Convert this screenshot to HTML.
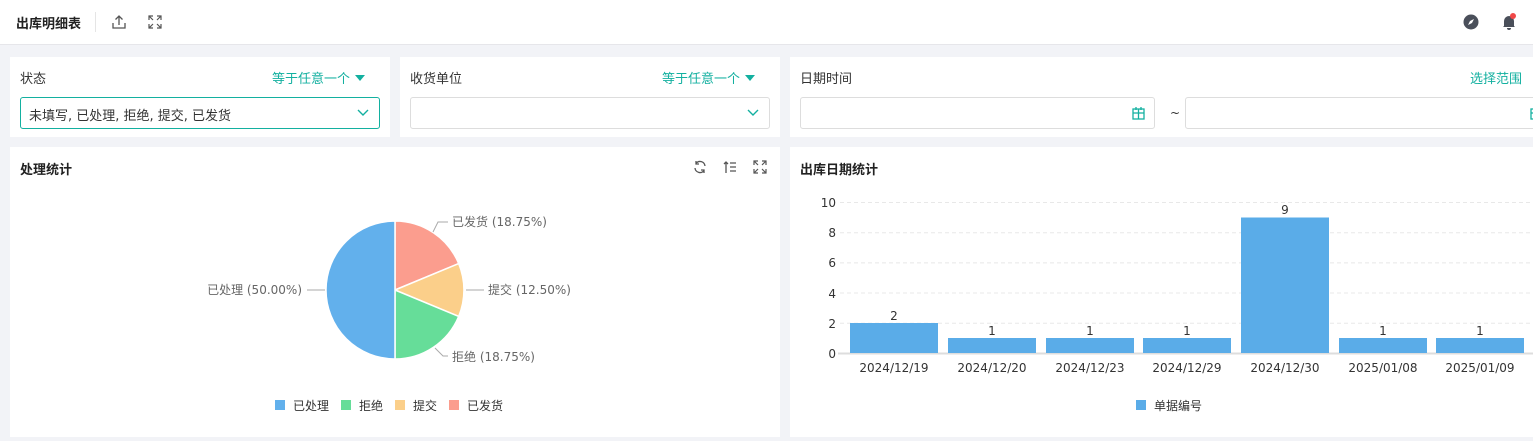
<!DOCTYPE html>
<html><head><meta charset="utf-8"><style>
*{box-sizing:border-box;margin:0;padding:0}
body{width:1533px;height:441px;overflow:hidden;background:#f2f3f7;font-family:"DejaVu Sans","Noto Sans CJK SC",sans-serif;position:relative;color:#333}
.top{position:absolute;left:0;top:0;width:1533px;height:45px;background:#fff;border-bottom:1px solid #e6e6ea}
.card{position:absolute;background:#fff}
.lbl{position:absolute;font-size:13px;color:#333}
.teal{color:#13b0a0}
.inp{position:absolute;height:32px;border:1px solid #ddd;border-radius:3px;background:#fff}
.t{position:absolute;font-size:13px;font-weight:bold;color:#222}
.tri{display:inline-block;width:0;height:0;border-left:5px solid transparent;border-right:5px solid transparent;border-top:6px solid #13b0a0;margin-left:5px;vertical-align:2px}
</style></head><body>
<div class="top">
 <div style="position:absolute;left:16px;top:13px;font-size:13px;font-weight:bold;color:#222">出库明细表</div>
 <div style="position:absolute;left:95px;top:12px;width:1px;height:20px;background:#e5e5e5"></div>
 <svg style="position:absolute;left:111px;top:14px" width="16" height="16" viewBox="0 0 16 16" fill="none" stroke="#555" stroke-width="1.3"><path d="M8 11V2M4.5 5.5L8 2l3.5 3.5M2 9v5h12V9"/></svg>
 <svg style="position:absolute;left:148px;top:15px" width="14" height="14" viewBox="0 0 14 14" fill="none" stroke="#555" stroke-width="1.2"><path d="M1 5V1h4M9 1h4v4M13 9v4H9M5 13H1V9M1 1l4 4M13 1L9 5M13 13L9 9M1 13l4-4"/></svg>
 <svg style="position:absolute;left:1463px;top:14px" width="16" height="16" viewBox="0 0 16 16"><circle cx="8" cy="8" r="7.5" fill="#4a4f5a"/><path d="M11 5L9 9 5 11 7 7z" fill="#fff"/></svg>
 <svg style="position:absolute;left:1501px;top:13px" width="16" height="18" viewBox="0 0 16 18"><path d="M3 13V8a5 5 0 0110 0v5l1 1H2z" fill="#4a4f5a"/><path d="M6 15h4a2 2 0 01-4 0" fill="#4a4f5a"/><circle cx="12" cy="3" r="3" fill="#f04848"/></svg>
</div>

<div class="card" style="left:10px;top:57px;width:380px;height:80px">
 <div class="lbl" style="left:10px;top:11px">状态</div>
 <div class="lbl teal" style="left:262px;top:11px">等于任意一个<span class="tri"></span></div>
 <div class="inp" style="left:10px;top:40px;width:360px;border-color:#13b0a0"><span style="position:absolute;left:8px;top:7px;font-size:13px;color:#333">未填写, 已处理, 拒绝, 提交, 已发货</span>
 <svg style="position:absolute;right:10px;top:11px" width="12" height="8" viewBox="0 0 12 8" fill="none" stroke="#13b0a0" stroke-width="1.4"><path d="M1 1l5 5 5-5"/></svg></div>
</div>
<div class="card" style="left:400px;top:57px;width:380px;height:80px">
 <div class="lbl" style="left:10px;top:11px">收货单位</div>
 <div class="lbl teal" style="left:262px;top:11px">等于任意一个<span class="tri"></span></div>
 <div class="inp" style="left:10px;top:40px;width:360px"><svg style="position:absolute;right:10px;top:11px" width="12" height="8" viewBox="0 0 12 8" fill="none" stroke="#13b0a0" stroke-width="1.4"><path d="M1 1l5 5 5-5"/></svg></div>
</div>
<div class="card" style="left:790px;top:57px;width:760px;height:80px">
 <div class="lbl" style="left:10px;top:11px">日期时间</div>
 <div class="lbl teal" style="left:680px;top:11px">选择范围</div>
 <div class="inp" style="left:10px;top:40px;width:355px"><svg style="position:absolute;right:9px;top:9px" width="13" height="13" viewBox="0 0 13 13" fill="none" stroke="#13b0a0" stroke-width="1.3"><rect x="1" y="2" width="11" height="10"/><path d="M1 6h11M6.5 2v10M4 0v3M9 0v3"/></svg></div>
 <div class="lbl" style="left:380px;top:49px;font-size:12px">~</div>
 <div class="inp" style="left:395px;top:40px;width:360px"><svg style="position:absolute;left:344px;top:9px" width="13" height="13" viewBox="0 0 13 13" fill="none" stroke="#13b0a0" stroke-width="1.3"><rect x="1" y="2" width="11" height="10"/><path d="M1 6h11M6.5 2v10"/></svg></div>
</div>

<div class="card" style="left:10px;top:147px;width:770px;height:290px">
 <div class="t" style="left:10px;top:12px">处理统计</div>
 <svg style="position:absolute;left:683px;top:13px" width="14" height="14" viewBox="0 0 14 14" fill="none" stroke="#555" stroke-width="1.3"><path d="M12 6A5 5 0 003 3.5M2 8a5 5 0 009 2.5M3 1v3h3M11 13v-3H8"/></svg>
 <svg style="position:absolute;left:713px;top:13px" width="14" height="14" viewBox="0 0 14 14" fill="none" stroke="#555" stroke-width="1.3"><path d="M3 13V2M1 4l2-2 2 2M7 3h6M7 7h6M7 11h6"/></svg>
 <svg style="position:absolute;left:743px;top:13px" width="14" height="14" viewBox="0 0 14 14" fill="none" stroke="#555" stroke-width="1.2"><path d="M1 5V1h4M9 1h4v4M13 9v4H9M5 13H1V9M1 1l4 4M13 1L9 5M13 13L9 9M1 13l4-4"/></svg>
</div>
<div class="card" style="left:790px;top:147px;width:760px;height:290px">
 <div class="t" style="left:10px;top:12px">出库日期统计</div>
</div>

<svg style="position:absolute;left:0;top:0" width="1533" height="441" font-family="DejaVu Sans, Noto Sans CJK SC, sans-serif">
 <g stroke="#fff" stroke-width="1.5">
  <path d="M395 290L395 221A69 69 0 0 1 458.7 263.6Z" fill="#fb9d8e"/>
  <path d="M395 290L458.7 263.6A69 69 0 0 1 458.7 316.4Z" fill="#fbcf8a"/>
  <path d="M395 290L458.7 316.4A69 69 0 0 1 395 359Z" fill="#66dd99"/>
  <path d="M395 290L395 359A69 69 0 0 1 395 221Z" fill="#62b0ec"/>
 </g>
 <g fill="none" stroke="#aaa" stroke-width="1">
  <path d="M433 232l5-10h10"/><path d="M466 290h18"/><path d="M435 348l8 8h5"/><path d="M307 290h18"/>
 </g>
 <g font-size="12" fill="#666">
  <text x="452" y="226">已发货 (18.75%)</text>
  <text x="488" y="294">提交 (12.50%)</text>
  <text x="452" y="361">拒绝 (18.75%)</text>
  <text x="302" y="294" text-anchor="end">已处理 (50.00%)</text>
 </g>
 <g font-size="12" fill="#333">
  <rect x="275" y="400" width="10" height="10" fill="#62b0ec"/><text x="293" y="410">已处理</text>
  <rect x="341" y="400" width="10" height="10" fill="#66dd99"/><text x="359" y="410">拒绝</text>
  <rect x="395" y="400" width="10" height="10" fill="#fbcf8a"/><text x="413" y="410">提交</text>
  <rect x="449" y="400" width="10" height="10" fill="#fb9d8e"/><text x="467" y="410">已发货</text>
 </g>
 <g stroke="#e8e8e8" stroke-dasharray="4 3">
  <path d="M840 202.5H1533M840 232.7H1533M840 262.9H1533M840 293H1533M840 323.2H1533"/>
 </g>
 <path d="M838 353.5H1533" stroke="#ddd" stroke-width="2"/>
 <g font-size="12" fill="#333" text-anchor="end">
  <text x="836" y="207">10</text><text x="836" y="237">8</text><text x="836" y="267">6</text><text x="836" y="298">4</text><text x="836" y="328">2</text><text x="836" y="358">0</text>
 </g>
 <g fill="#5aace8">
  <rect x="850" y="323" width="88" height="30"/>
  <rect x="948" y="338" width="88" height="15"/>
  <rect x="1046" y="338" width="88" height="15"/>
  <rect x="1143" y="338" width="88" height="15"/>
  <rect x="1241" y="217.5" width="88" height="135.5"/>
  <rect x="1339" y="338" width="88" height="15"/>
  <rect x="1436" y="338" width="88" height="15"/>
 </g>
 <g font-size="12" fill="#333" text-anchor="middle">
  <text x="894" y="320">2</text><text x="992" y="335">1</text><text x="1090" y="335">1</text><text x="1187" y="335">1</text><text x="1285" y="214">9</text><text x="1383" y="335">1</text><text x="1480" y="335">1</text>
  <text x="894" y="372">2024/12/19</text><text x="992" y="372">2024/12/20</text><text x="1090" y="372">2024/12/23</text><text x="1187" y="372">2024/12/29</text><text x="1285" y="372">2024/12/30</text><text x="1383" y="372">2025/01/08</text><text x="1480" y="372">2025/01/09</text>
 </g>
 <rect x="1136" y="400" width="10" height="10" fill="#5aace8"/><text x="1154" y="410" font-size="12" fill="#333">单据编号</text>
</svg>
</body></html>
